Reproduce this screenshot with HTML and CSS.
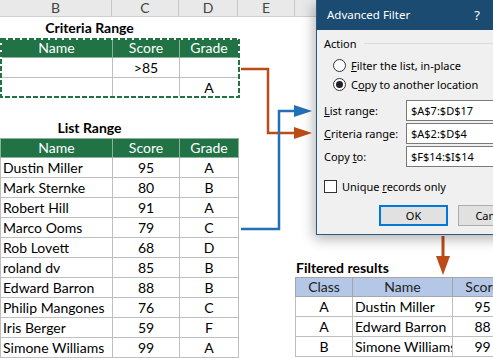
FILE: index.html
```html
<!DOCTYPE html>
<html>
<head>
    <title>Advanced Filter - copy to another location</title>
    <!-- Styling for the page -->
    <link rel="stylesheet" href="styles.css">
</head>
<body>
    <!-- Column letters of the worksheet (F and on sit under the dialog) -->
    <div class="col-bar">
        <div class="col-head w-b">B</div>
        <div class="col-head w-c">C</div>
        <div class="col-head w-d">D</div>
        <div class="col-head w-e">E</div>
        <div class="col-head w-f"></div>
    </div>

    <!-- Worksheet cells -->
    <div class="sheet">
        <div class="title crit-title">Criteria Range</div>
        <table class="range crit-range">
            <colgroup><col class="w-b"><col class="w-c"><col class="w-d"></colgroup>
            <tr class="head green"><td>Name</td><td>Score</td><td>Grade</td></tr>
            <tr><td></td><td class="mid">&gt;85</td><td></td></tr>
            <tr><td></td><td></td><td class="mid">A</td></tr>
        </table>

        <div class="title list-title">List Range</div>
        <table class="range list-range">
            <colgroup><col class="w-b"><col class="w-c"><col class="w-d"></colgroup>
            <tr class="head green"><td>Name</td><td>Score</td><td>Grade</td></tr>
            <tr><td>Dustin Miller</td><td class="mid">95</td><td class="mid">A</td></tr>
            <tr><td>Mark Sternke</td><td class="mid">80</td><td class="mid">B</td></tr>
            <tr><td>Robert Hill</td><td class="mid">91</td><td class="mid">A</td></tr>
            <tr><td>Marco Ooms</td><td class="mid">79</td><td class="mid">C</td></tr>
            <tr><td>Rob Lovett</td><td class="mid">68</td><td class="mid">D</td></tr>
            <tr><td>roland dv</td><td class="mid">85</td><td class="mid">B</td></tr>
            <tr><td>Edward Barron</td><td class="mid">88</td><td class="mid">B</td></tr>
            <tr><td>Philip Mangones</td><td class="mid">76</td><td class="mid">C</td></tr>
            <tr><td>Iris Berger</td><td class="mid">59</td><td class="mid">F</td></tr>
            <tr><td>Simone Williams</td><td class="mid">99</td><td class="mid">A</td></tr>
        </table>

        <div class="title result-title">Filtered results</div>
        <table class="range result-range">
            <colgroup><col class="w-f"><col class="w-g"><col class="w-h"></colgroup>
            <tr class="head blue"><td>Class</td><td>Name</td><td>Score</td></tr>
            <tr><td class="mid">A</td><td>Dustin Miller</td><td class="mid">95</td></tr>
            <tr><td class="mid">A</td><td>Edward Barron</td><td class="mid">88</td></tr>
            <tr><td class="mid">B</td><td>Simone Williams</td><td class="mid">99</td></tr>
        </table>
    </div>

    <!-- Copy marquee and the arrows that link the ranges to the dialog -->
    <svg class="arrows" width="493" height="358" viewBox="0 0 493 358">
        <rect x="1" y="39" width="238" height="58" fill="none" stroke="#fff" stroke-width="2"/>
        <rect x="1" y="39" width="238" height="58" fill="none" stroke="#217346" stroke-width="2" stroke-dasharray="5 2"/>
        <path d="M241 69 H268 V133 H296" fill="none" stroke="#bd4b17" stroke-width="2.5"/>
        <polygon points="294,127 312,133 294,139" fill="#bd4b17"/>
        <path d="M241 229 H279 V111 H296" fill="none" stroke="#2170b8" stroke-width="2.5"/>
        <polygon points="294,105 312,111 294,117" fill="#2170b8"/>
        <path d="M443 236 V258" fill="none" stroke="#bd4b17" stroke-width="3"/>
        <polygon points="436,256 443,275 450,256" fill="#bd4b17"/>
    </svg>

    <!-- Advanced Filter dialog -->
    <div class="dialog">
        <div class="dlg-title">
            <span>Advanced Filter</span>
            <span class="help">?</span>
        </div>
        <div class="dlg-body">
            <div class="group-label"><span>Action</span></div>
            <div class="option">
                <span class="radio"></span>
                <span><u>F</u>ilter the list, in-place</span>
            </div>
            <div class="option">
                <span class="radio checked"></span>
                <span>C<u>o</u>py to another location</span>
            </div>
            <div class="field first">
                <label><u>L</u>ist range:</label>
                <div class="box">$A$7:$D$17</div>
            </div>
            <div class="field">
                <label><u>C</u>riteria range:</label>
                <div class="box">$A$2:$D$4</div>
            </div>
            <div class="field">
                <label>Copy <u>t</u>o:</label>
                <div class="box">$F$14:$I$14</div>
            </div>
            <div class="check-row">
                <span class="checkbox"></span>
                <span>Unique <u>r</u>ecords only</span>
            </div>
            <div class="buttons">
                <div class="btn default">OK</div>
                <div class="btn">Cancel</div>
            </div>
        </div>
    </div>
</body>
</html>
```

FILE: styles.css
```css
body {
    margin: 0;
    width: 493px;
    height: 358px;
    overflow: hidden;
    position: relative;
    background-color: #fff;
    font-family: Lato, "Liberation Sans", sans-serif;
    font-size: 14px;
    color: #000;
}

/* Column widths shared by the letter bar and the tables */
.w-b { width: 112px; }
.w-c { width: 67px; }
.w-d { width: 59px; }
.w-e { width: 57px; }
.w-f { width: 57px; }
.w-g { width: 100px; }
.w-h { width: 60px; }

/* Letter bar on top of the sheet */
.col-bar {
    display: flex;
    height: 16px;
    background-color: #e9e9e9;
    border-bottom: 1px solid #d0d0d0;
}

.col-head {
    flex: none;
    box-sizing: border-box;
    border-right: 1px solid #c6c6c6;
    text-align: center;
    line-height: 16px;
    font-size: 14px;
    color: #444;
}

/* Sheet grid: one track per column and per row */
.sheet {
    display: grid;
    grid-template-columns: 112px 67px 59px 57px 57px 100px 60px;
    grid-template-rows: 21px 19px 20px 20px 20px 21px 19px repeat(10, 20px);
}

.title {
    font-weight: bold;
    line-height: 21px;
    white-space: nowrap;
}

.crit-title { grid-column: 1 / 3; grid-row: 1; text-align: center; }
.list-title { grid-column: 1 / 3; grid-row: 6; text-align: center; }
.result-title { grid-column: 5 / 7; grid-row: 13; padding-left: 1px; line-height: 22px; }

.crit-range { grid-column: 1 / 4; grid-row: 2 / 5; }
.list-range { grid-column: 1 / 4; grid-row: 7 / 18; }
.result-range { grid-column: 5 / 8; grid-row: 14 / 18; }

.range {
    border-collapse: collapse;
    table-layout: fixed;
    width: 100%;
}

.range td {
    height: 19px;
    padding: 0 2px;
    border: 1px solid #bfbfbf;
    white-space: nowrap;
    overflow: hidden;
    line-height: 18px;
}

.range td.mid {
    text-align: center;
}

.range tr.head td {
    height: 18px;
    text-align: center;
}

.green td {
    background-color: #217346;
    color: #fff;
    border-color: #8fb09c;
}

.blue td {
    background-color: #b4c7e7;
    color: #222;
    border-color: #a6a6a6;
}

/* Overlay for the marquee and arrows */
.arrows {
    position: absolute;
    left: 0;
    top: 0;
}

/* Dialog window floating over the sheet */
.dialog {
    position: absolute;
    left: 316px;
    top: 0;
    width: 210px;
    background-color: #f0f0f0;
    border: 1px solid #2b5a80;
    border-top: none;
    box-shadow: -2px 4px 12px rgba(0, 0, 0, 0.3);
    font-family: "Noto Sans", "Open Sans", sans-serif;
    font-size: 11px;
    color: #000;
}

.dlg-title {
    display: flex;
    height: 30px;
    padding: 0 47px 0 10px;
    line-height: 30px;
    background-color: #1b4b71;
    color: #fff;
    font-size: 11.5px;
}

.help {
    margin-left: auto;
    font-size: 13px;
}

.dlg-body {
    padding: 5px 0 8px 7px;
}

.group-label {
    display: flex;
    align-items: center;
    height: 16px;
}

.group-label::after {
    content: "";
    flex: 1;
    height: 1px;
    margin-left: 7px;
    background-color: #dcdcdc;
}

.option {
    display: flex;
    align-items: center;
    gap: 5px;
    height: 16px;
    margin-top: 3px;
    padding-left: 9px;
}

.group-label + .option {
    margin-top: 6px;
}

.radio {
    box-sizing: border-box;
    width: 13px;
    height: 13px;
    border: 1px solid #333;
    border-radius: 50%;
    background-color: #fff;
    position: relative;
}

.radio.checked::after {
    content: "";
    position: absolute;
    left: 2px;
    top: 2px;
    width: 7px;
    height: 7px;
    border-radius: 50%;
    background-color: #222;
}

.field {
    display: flex;
    align-items: center;
    height: 21px;
    margin-top: 2px;
}

.field.first {
    margin-top: 8px;
}

.field label {
    width: 82px;
    flex: none;
}

.box {
    flex: 1;
    height: 21px;
    box-sizing: border-box;
    border: 1px solid #7a7a7a;
    background-color: #fff;
    padding-left: 4px;
    line-height: 19px;
}

.check-row {
    display: flex;
    align-items: center;
    gap: 5px;
    height: 14px;
    margin-top: 12px;
}

.checkbox {
    box-sizing: border-box;
    width: 13px;
    height: 13px;
    border: 1px solid #333;
    background-color: #fff;
}

.buttons {
    display: flex;
    gap: 10px;
    margin-top: 12px;
    padding-left: 55px;
}

.btn {
    box-sizing: border-box;
    width: 75px;
    height: 21px;
    border: 1px solid #adadad;
    background-color: #e1e1e1;
    text-align: center;
    line-height: 19px;
}

.btn.default {
    border: 2px solid #0078d7;
    line-height: 17px;
}
```
